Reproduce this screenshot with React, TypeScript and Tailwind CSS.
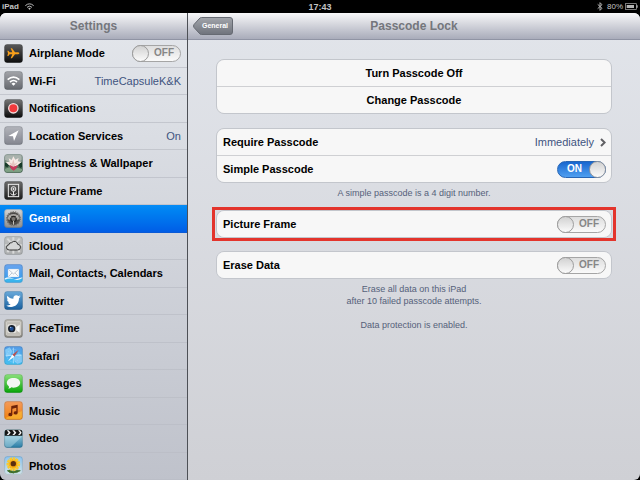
import React, { ReactNode, useState } from "react";

interface NavItem {
  name: string;
  value?: string;
  hasSwitch?: boolean;
  from: string;
  to: string;
  art: ReactNode;
}

const navItems: NavItem[] = [
  {
    name: "Airplane Mode",
    hasSwitch: true,
    from: "#5b5b5b",
    to: "#0c0c0c",
    art: (
      <path
        d="M46 28c0-2-3-3-6-3h-7l-9-12h-4l5 12h-8l-4-5h-3l2 8-2 8h3l4-5h8l-5 12h4l9-12h7c3 0 6-1 6-3z"
        fill="#f9a01b"
      />
    ),
  },
  {
    name: "Wi-Fi",
    value: "TimeCapsuleK&K",
    from: "#a3a5aa",
    to: "#65686e",
    art: (
      <g fill="none" stroke="#fff" strokeWidth="5">
        <path d="M11 26q17.500-15 35 0M18 33q10.500-9 21 0" />
        <path d="M28.500 44l-6-6q6-5 12 0z" fill="#fff" stroke="none" />
      </g>
    ),
  },
  {
    name: "Notifications",
    from: "#777",
    to: "#0a0a0a",
    art: <circle cx="28" cy="28" r="14" fill="#f03a3c" stroke="#f3dcdc" strokeWidth="4" />,
  },
  {
    name: "Location Services",
    value: "On",
    from: "#b3b5bc",
    to: "#84868f",
    art: <path d="M44 13L13 30l14 1 3 14z" fill="#fff" />,
  },
  {
    name: "Brightness & Wallpaper",
    from: "#8fa398",
    to: "#31543a",
    art: (
      <>
        <path d="M3 3h50v16l-12 6-9-8-14 7-15-6z" fill="#a9b3ad" />
        <path d="M3 26l15 5-8 9-7-3zM54 25l-13 6 8 11 5-3z" fill="#173b28" />
        <path d="M3 44l14-4 11 8 12-7 14 4v5q-2 5-6 5H8q-5 0-5-5z" fill="#7fa184" />
        <path d="M28 7l6 10 10-5-3 10 12 1-12 11-13 5-14-6-9-10 12 0-3-10 9 5z" fill="#f6e9e4" />
        <path d="M28 16l4 14 10-6-10 13-4 3-5-4-8-12 9 5z" fill="#e6c3bf" />
        <path d="M17 33l11 5 14-4-6 10-7 6-8-6z" fill="#c83a5c" />
      </>
    ),
  },
  {
    name: "Picture Frame",
    from: "#6d6d6d",
    to: "#1b1b1b",
    art: (
      <g fill="none" stroke="#eee" strokeWidth="3">
        <rect x="13" y="10" width="31" height="37" />
        <circle cx="28.500" cy="24" r="7" />
        <circle cx="28.500" cy="24" r="2" fill="#eee" />
        <path d="M28.500 31v12M20 37q3 6 8 5q6 1 9-5" />
      </g>
    ),
  },
  {
    name: "General",
    from: "#d6d6d6",
    to: "#8d8d8d",
    art: (
      <>
        <circle cx="28.500" cy="29" r="20" fill="#4a4846" stroke="#77736f" strokeWidth="5" strokeDasharray="4 3" />
        <path d="M10 30a19 19 0 0 1 37 0l-8 3-5-9H22l-5 9z" fill="#a5a29e" />
        <circle cx="28.500" cy="30" r="8" fill="#77736f" stroke="#272523" strokeWidth="4" />
        <path d="M28.500 36v11M22 26l-8-7M35 26l8-7" stroke="#c4c1bc" strokeWidth="3" />
      </>
    ),
  },
  {
    name: "iCloud",
    from: "#bfc0c0",
    to: "#aeb0b1",
    art: (
      <>
        <path d="M28 3v50M3 28h51M10 8l37 40M47 8L10 48" stroke="#d9dada" strokeWidth="6" />
        <path
          d="M16 42a8 8 0 0 1-1-16 7 7 0 0 1 8-6 10 10 0 0 1 18 5 8.500 8.500 0 0 1 0 17z"
          fill="#d5d6d6"
          stroke="#343434"
          strokeWidth="3"
        />
      </>
    ),
  },
  {
    name: "Mail, Contacts, Calendars",
    from: "#6ba4ee",
    to: "#2c9df0",
    art: (
      <>
        <path d="M2 43q13-6 22 0t31-3v9q0 6-6 6H8q-6 0-6-6z" fill="#e9f8ff" />
        <path d="M2 47q18-7 29-1t24-4v7q0 6-6 6H8q-6 0-6-6z" fill="#39b5ef" />
        <rect x="12" y="15" width="33" height="24" rx="2" fill="#f8fafc" stroke="#bdcbdc" />
        <path d="M14 17l14.500 13L43 17M14 37l10-10M43 37L33 27" fill="none" stroke="#a3afc0" strokeWidth="2" />
      </>
    ),
  },
  {
    name: "Twitter",
    from: "#6aaadb",
    to: "#185f9e",
    art: (
      <path
        d="M50 16c-1 1-3 2-5 2 2-1 3-3 4-5-2 1-4 2-6 2a9 9 0 0 0-15 8c-8 0-13-4-18-9-2 5-1 9 3 12-2 0-3 0-4-1 0 4 3 8 7 9-1 1-2 1-4 0 1 4 4 6 8 6-4 3-8 4-13 4 16 9 38 2 38-22 2-2 4-4 5-6z"
        fill="#fff"
      />
    ),
  },
  {
    name: "FaceTime",
    from: "#b9b6af",
    to: "#8b8881",
    art: (
      <>
        <rect x="7" y="8" width="43" height="41" rx="3" fill="#c0bdb6" stroke="#e1dfd9" strokeWidth="2" />
        <path d="M36 25l11-8v24l-11-8z" fill="#f7f7f5" />
        <rect x="10" y="16" width="27" height="26" rx="5" fill="#e6e4df" />
        <circle cx="23" cy="29" r="11" fill="#18202c" />
        <circle cx="23" cy="29" r="6" fill="#1f4e93" />
        <circle cx="20" cy="25" r="2" fill="#a9cdfd" />
      </>
    ),
  },
  {
    name: "Safari",
    from: "#559be8",
    to: "#43c1f3",
    art: (
      <>
        <path d="M3 11l14-7 8 12-6 13-13 4zM29 34l14-12 11 4v22l-14 6-9-8z" fill="#7fc9f7" />
        <path d="M28 5v47M5 28h47" stroke="#cdeeff" strokeWidth="2" />
        <circle cx="28" cy="29" r="19" fill="none" stroke="#a3d6f8" strokeWidth="2" strokeDasharray="3 4" />
        <path d="M44 11L31 32l-6-6z" fill="#b9504f" />
        <path d="M12 46l13-20 6 6z" fill="#f5fbff" />
      </>
    ),
  },
  {
    name: "Messages",
    from: "#8de27d",
    to: "#06a506",
    art: (
      <path
        d="M28.500 12c12 0 20 6 20 14.500S40 41 28.500 41l-7-1c-2 3-5 4-9 4 2-1 3-4 2-7C11 34 8.500 31 8.500 26.500 8.500 18 17 12 28.500 12z"
        fill="#f2f6f2"
      />
    ),
  },
  {
    name: "Music",
    from: "#f59b5c",
    to: "#f0800c",
    art: (
      <>
        <path d="M3 52L54 30v18q0 6-6 6H9q-6 0-6-2z" fill="#fbc33a" opacity=".6" />
        <path
          d="M22 15l19-4v25a6 5 0 1 1-4-5V20l-12 3v18a6 5 0 1 1-4-5z"
          fill="#6d2308"
        />
      </>
    ),
  },
  {
    name: "Video",
    from: "#c6e8f2",
    to: "#277ca5",
    art: (
      <>
        <path d="M2 22h53L20 55H9q-7 0-7-7z" fill="#cdeaf2" opacity=".4" />
        <path d="M2 20V8q0-6 6-6h41q6 0 6 6v12z" fill="#161616" />
        <path d="M8 4h6l6 7-6 7H8l6-7zM25 4h6l6 7-6 7h-6l6-7zM42 4h6l5 7-5 7h-6l6-7z" fill="#f2f2f2" />
      </>
    ),
  },
  {
    name: "Photos",
    from: "#8cc4f0",
    to: "#d3e5ea",
    art: (
      <>
        <path
          d="M28 35v18M28 47q-9-8-18-3q8 9 18 6q10 2 21-6q-10-4-21 3"
          fill="#3d6d26"
          stroke="#3d6d26"
          strokeWidth="2"
        />
        <circle cx="28" cy="24" r="15" fill="#f2a512" />
        <circle cx="28" cy="24" r="16" fill="none" stroke="#fcc92a" strokeWidth="9" strokeDasharray="7 2" />
        <circle cx="28" cy="23" r="8" fill="#5a2f10" />
      </>
    ),
  },
];

const NavIcon: React.FC<{ item: NavItem; index: number }> = ({ item, index }) => (
  <svg viewBox="0 0 57 57" className="size-[19px] shrink-0" aria-hidden="true">
    <defs>
      <linearGradient id={`tile-${index}`} x1="0" y1="0" x2="0" y2="1">
        <stop offset="0" stopColor={item.from} />
        <stop offset="1" stopColor={item.to} />
      </linearGradient>
    </defs>
    <rect x="1" y="1" width="55" height="55" rx="9" fill={`url(#tile-${index})`} />
    {item.art}
    <rect x="2" y="2" width="53" height="53" rx="8" fill="none" stroke="#333a44" strokeOpacity=".25" strokeWidth="2" />
  </svg>
);

const Switch: React.FC<{ id: string; initial?: boolean }> = ({ id, initial = false }) => {
  const [on, setOn] = useState<boolean>(initial);

  return (
    <span className="relative flex h-[17px] w-[49px] shrink-0">
      <input
        id={id}
        type="checkbox"
        role="switch"
        checked={on}
        onChange={(e) => setOn(e.target.checked)}
        className="h-full w-full cursor-pointer appearance-none rounded-full border border-[#a5a5a5] bg-linear-to-b from-[#dedede] to-[#fafafa] checked:border-[#2765b4] checked:from-[#1766cf] checked:to-[#4f9ff0]"
      />
      <span
        aria-hidden="true"
        className={
          on
            ? "pointer-events-none absolute inset-y-0 left-[10px] flex items-center text-[10px] font-bold text-white"
            : "pointer-events-none absolute inset-y-0 right-[7px] flex items-center text-[10px] font-bold text-[#868686]"
        }
      >
        {on ? "ON" : "OFF"}
      </span>
      <span
        className={
          on
            ? "pointer-events-none absolute right-0 size-[17px] rounded-full border border-[#8f949c] bg-linear-to-b from-[#d2d2d2] to-[#fbfbfb]"
            : "pointer-events-none absolute left-0 size-[17px] rounded-full border border-[#9c9c9c] bg-linear-to-b from-[#d2d2d2] to-[#fbfbfb]"
        }
      />
    </span>
  );
};

// the 1px gaps show the group's own background as row dividers
const Group: React.FC<{ children: ReactNode }> = ({ children }) => (
  <div className="grid gap-px overflow-hidden rounded-lg border border-[#c3c6cc] bg-[#cfd0d3]">
    {children}
  </div>
);

const SwitchRow: React.FC<{ id: string; label: string; initial?: boolean }> = ({ id, label, initial }) => (
  <div className="flex h-[26px] items-center justify-between bg-[#f7f7f7] pr-[5px] pl-[6px]">
    <label htmlFor={id} className="font-bold">
      {label}
    </label>
    <Switch id={id} initial={initial} />
  </div>
);

const headerClass =
  "relative flex h-[27px] shrink-0 items-center justify-center border-b border-[#9094a4] bg-linear-to-b from-[#f8f8f9] to-[#a9acba]";

const App: React.FC = () => {
  const [selected, setSelected] = useState<string>("General");

  return (
    <div className="flex min-h-screen flex-col bg-black font-['Liberation_Sans',Arial,sans-serif] text-[11px] leading-3 text-black">
      <div className="grid h-[13px] shrink-0 grid-cols-3 items-center px-[2px] text-[8px] font-bold text-[#c4c4c4]">
        <div className="flex items-center gap-[6px]">
          <span>iPad</span>
          <svg viewBox="0 0 27 21" className="h-[7px] w-[9px]" aria-hidden="true">
            <g fill="none" stroke="#bdbdbd" strokeWidth="3">
              <path d="M1 8Q13.500-3 26 8M6 13q7.500-7 15 0" />
              <path d="M13.500 21l-4-5q4-3 8 0z" fill="#bdbdbd" stroke="none" />
            </g>
          </svg>
        </div>
        <span className="text-center text-[9px]">17:43</span>
        <div className="flex items-center justify-end gap-[2px]">
          <svg viewBox="0 0 18 27" className="mr-[2px] h-[9px] w-[6px]" aria-hidden="true">
            <path d="M2 7l13 12-6 6V2l6 6L2 20" fill="none" stroke="#b4b4b4" strokeWidth="3" />
          </svg>
          <span className="font-normal">80%</span>
          <svg viewBox="0 0 39 21" className="h-[7px] w-[13px]" aria-hidden="true">
            <rect x="1" y="2" width="33" height="17" fill="none" stroke="#b4b4b4" strokeWidth="2" />
            <rect x="5" y="6" width="22" height="9" fill="#b4b4b4" />
            <path d="M36 7v7" stroke="#b4b4b4" strokeWidth="4" />
          </svg>
        </div>
      </div>

      <div className="flex flex-1">
        <aside className="flex w-[188px] shrink-0 flex-col overflow-hidden rounded-md rounded-r-none border-r border-[#4d5056] bg-linear-to-b from-[#e4e7ec] to-[#bfc2cb]">
          <header className={headerClass}>
            <h1 className="text-xs font-bold text-[#74767c]">Settings</h1>
          </header>
          <ul className="grid flex-1 auto-rows-fr">
            {navItems.map((item, index) => {
              const active = item.name === selected;
              const rowClass = active
                ? "flex h-full items-center gap-[6px] border-b border-[#0a5ad6] bg-linear-to-b from-[#058cf5] to-[#015de6] pr-[6px] pl-1 text-white"
                : "flex h-full items-center gap-[6px] border-b border-[#b9bcc4]/70 pr-[6px] pl-1";

              return (
                <li key={item.name}>
                  {item.hasSwitch ? (
                    <div className={rowClass}>
                      <NavIcon item={item} index={index} />
                      <label htmlFor="airplane" className="flex-1 font-bold">
                        {item.name}
                      </label>
                      <Switch id="airplane" />
                    </div>
                  ) : (
                    <a href="#" className={rowClass} onClick={() => setSelected(item.name)}>
                      <NavIcon item={item} index={index} />
                      <span className="flex-1 font-bold whitespace-nowrap">{item.name}</span>
                      {item.value && <span className="text-[#41547f]">{item.value}</span>}
                    </a>
                  )}
                </li>
              );
            })}
          </ul>
        </aside>

        <main className="flex flex-1 flex-col overflow-hidden rounded-md rounded-l-none bg-linear-to-b from-[#e2e5eb] to-[#cfd0d5]">
          <header className={headerClass}>
            <button className="absolute left-[5px] flex h-[18px] w-10 cursor-pointer items-center justify-center pl-1 text-[7px] font-bold text-white">
              <svg viewBox="0 0 40 18" className="absolute inset-0 size-full" aria-hidden="true">
                <defs>
                  <linearGradient id="back" x1="0" y1="0" x2="0" y2="1">
                    <stop offset="0" stopColor="#a2a5ab" />
                    <stop offset="1" stopColor="#6f737c" />
                  </linearGradient>
                </defs>
                <path
                  d="M8.500 .5H37q2.500 0 2.500 2.500v12q0 2.500-2.500 2.500H8.500Q7 17.500 6 16L1 10.500Q0 9 1 7.500L6 2Q7 .5 8.500 .5z"
                  fill="url(#back)"
                  stroke="#666a72"
                />
              </svg>
              <span className="relative">General</span>
            </button>
            <h2 className="text-xs font-bold text-[#74767c]">Passcode Lock</h2>
          </header>

          <div className="px-7 pt-[19px]">
            <Group>
              <button className="h-[26px] cursor-pointer bg-[#f7f7f7] font-bold">Turn Passcode Off</button>
              <button className="h-[26px] cursor-pointer bg-[#f7f7f7] font-bold">Change Passcode</button>
            </Group>

            <div className="mt-[14px]">
              <Group>
                <button className="flex h-[26px] cursor-pointer items-center bg-[#f7f7f7] pr-[5px] pl-[6px]">
                  <span className="flex-1 text-left font-bold">Require Passcode</span>
                  <span className="text-[#41547f]">Immediately</span>
                  <svg viewBox="0 0 18 27" className="ml-[6px] h-[9px] w-[6px]" aria-hidden="true">
                    <path d="M3 3l11 10.500L3 24" fill="none" stroke="#5f5f63" strokeWidth="6" />
                  </svg>
                </button>
                <SwitchRow id="simple" label="Simple Passcode" initial />
              </Group>
            </div>
            <p className="mt-1 text-center text-[9px] text-[#55617a]">A simple passcode is a 4 digit number.</p>

            <div className="-mx-1 mt-2 border-3 border-[#e3342c] px-px">
              <Group>
                <SwitchRow id="frame" label="Picture Frame" />
              </Group>
            </div>

            <div className="mt-[10px]">
              <Group>
                <SwitchRow id="erase" label="Erase Data" />
              </Group>
            </div>
            <p className="mt-1 text-center text-[9px] text-[#55617a]">
              Erase all data on this iPad
              <br />
              after 10 failed passcode attempts.
            </p>
            <p className="mt-3 text-center text-[9px] text-[#55617a]">Data protection is enabled.</p>
          </div>
        </main>
      </div>
    </div>
  );
};

export default App;
